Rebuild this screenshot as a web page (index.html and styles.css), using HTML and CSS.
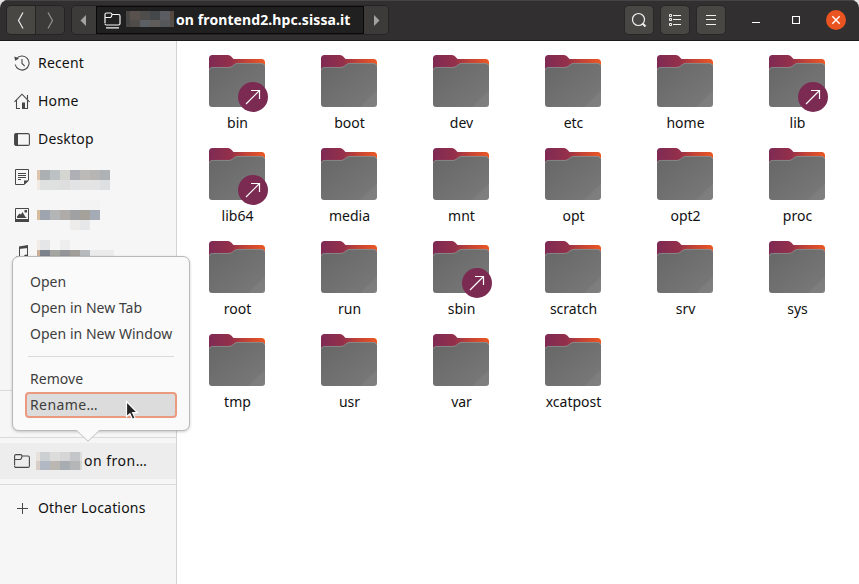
FILE: index.html
```html
<!DOCTYPE html>
<html lang="en">
<head>
<meta charset="utf-8">
<title>Files</title>
<link rel="stylesheet" href="styles.css">
</head>
<body>
<svg class="defs" width="0" height="0" aria-hidden="true">
  <defs>
    <linearGradient id="tab" x1="0" y1="0" x2="1" y2="0">
      <stop offset="0" stop-color="#7e2a54"/><stop offset=".4" stop-color="#94304a"/><stop offset=".62" stop-color="#bd4038"/><stop offset="1" stop-color="#ee5722"/>
    </linearGradient>
    <linearGradient id="front" x1="0" y1="0" x2="1" y2="1">
      <stop offset="0" stop-color="#666"/><stop offset="1" stop-color="#7a7a7a"/>
    </linearGradient>
    <symbol id="folder" viewBox="0 0 60 56">
      <path d="M2 3.500Q2 0 5.500 0H21q2 0 3.200 1.500L26.500 4H54.500Q58 4 58 7.500V20H2z" fill="url(#tab)"/>
      <path d="M2 15.500Q2 12 5.500 12H22q2.200 0 3.700-1.400l1.500-1.300Q28.800 8 31 8H54.500Q58 8 58 11.500V49q0 3-3 3H5q-3 0-3-3z" fill="url(#front)"/>
      <path d="M2.300 15Q2.800 12.400 5.500 12.400H22q2.200 0 3.700-1.400l1.500-1.300Q28.800 8.400 31 8.400H54.500q2.700 0 3.200 2.600" fill="none" stroke="#fff" stroke-opacity=".25" stroke-width=".8"/>
      <path d="M58 35.500V49q0 3-3 3H41z" fill="#fff" fill-opacity=".05"/>
    </symbol>
    <symbol id="link" viewBox="0 0 30 30">
      <circle cx="15" cy="15" r="15" fill="#7b2a52"/>
      <path d="M8 22 21.500 8.500M13 8.500h8.500V17" fill="none" stroke="#fff" stroke-width="1.200"/>
    </symbol>
  </defs>
</svg>
<div class="window">
  <header class="headerbar">
    <div class="nav">
      <button class="btn back" aria-label="Back"><svg width="28" height="28"><path d="M16 6.500 11.500 14.500 16 22.500" fill="none" stroke="#e8e8e7" stroke-width="1.200"/></svg></button>
      <button class="btn forward" aria-label="Forward"><svg width="28" height="28"><path d="M12 6.500 16.500 14.500 12 22.500" fill="none" stroke="#929190" stroke-width="1.200"/></svg></button>
    </div>
    <div class="pathbar">
      <span class="step"><svg width="24" height="28"><path d="M14 9v11L8.500 14.500z" fill="#a3a2a1"/></svg></span>
      <span class="place">
        <svg width="17" height="17" fill="none" stroke="#f5f5f5" stroke-width="1.200"><path d="M1 11V2.500Q1 1 2.500 1h4q1.300 0 1.500 1.500h6.500q1.500 0 1.500 1.500v7.500q0 1.500-1.500 1.500h-12Q1 13 1 11.500M1 5.500h5.500Q7.700 5 8 2.500M2 15.800h13"/></svg>
        <svg class="mask-path" width="48" height="16" shape-rendering="crispEdges"><path fill="#484542" d="M0 0h4v9H0z"/><path fill="#59514d" d="M4 0h10v9H4z"/><path fill="#4e4d4c" d="M14 0h10v9H14z"/><path fill="#45484b" d="M24 0h10v9H24z"/><path fill="#5a5c62" d="M34 0h10v9H34z"/><path fill="#54483f" d="M44 0h4v9h-4z"/><path fill="#444546" d="M0 9h4v7H0z"/><path fill="#504c49" d="M4 9h10v7H4z"/><path fill="#5c6064" d="M14 9h10v7H14z"/><path fill="#605c5a" d="M24 9h10v7H24z"/><path fill="#55575b" d="M34 9h10v7H34z"/><path fill="#564e48" d="M44 9h4v7h-4z"/></svg>
        <span class="place-name">on frontend2.hpc.sissa.it</span>
      </span>
      <span class="step"><svg width="24" height="28"><path d="M10 9v11l5.500-5.500z" fill="#a3a2a1"/></svg></span>
    </div>
    <div class="tools">
      <button class="btn tool" aria-label="Search"><svg width="28" height="28" fill="none" stroke="#f0f0ef"><circle cx="13.500" cy="13.500" r="6" stroke-width="1.200"/><path d="m17.500 17.500 3 3" stroke-width="2"/></svg></button>
      <button class="btn tool" aria-label="List view"><svg width="28" height="28" fill="none" stroke="#f0f0ef"><path d="M12 9.500h8M12 13.500h8M12 18.500h8M8.500 8.500h2v2h-2zM8.500 12.500h2v2h-2zM8.500 17.500h2v2h-2z"/></svg></button>
      <button class="btn tool" aria-label="Menu"><svg width="28" height="28" stroke="#f0f0ef"><path d="M9 9.500h10M9 13.500h10M9 18.500h10"/></svg></button>
    </div>
    <div class="controls">
      <svg width="8" height="20"><path d="M0 12.500h8" stroke="#fff"/></svg>
      <svg width="8" height="20"><path d="M.5 6.500h7v7h-7z" fill="none" stroke="#fff" stroke-width="1.200"/></svg>
      <svg width="20" height="20"><circle cx="10" cy="10" r="10" fill="#e95420"/><path d="m6.300 6.300 7.400 7.400m0-7.400-7.400 7.400" stroke="#fff" stroke-width="1.400"/></svg>
    </div>
  </header>
  <div class="content">
    <nav class="sidebar">
      <div class="row"><svg class="ico" width="16" height="16" fill="none" stroke="#474747" stroke-width="1.100"><path d="M2.200 4.200A7 7 0 1 1 1.200 9.500M8 4v4.500l2.700 2.700"/><path d="M.3 1.500 1.200 5.800 5 3.600z" fill="#474747" stroke="none"/></svg><span>Recent</span></div>
      <div class="row"><svg class="ico" width="16" height="16" fill="none" stroke="#474747" stroke-width="1.100"><path d="M.5 8.800 8 1.200l7.500 7.600M2.500 7v8.500H6M13.500 7v8.500H11M13.500 2v4"/><path d="M8 9.500h3V16H8z" fill="#474747" stroke="none"/></svg><span>Home</span></div>
      <div class="row"><svg class="ico" width="16" height="16"><rect x=".6" y="2.600" width="14.800" height="11.800" rx="1.500" fill="none" stroke="#474747" stroke-width="1.100"/><path d="M1 2.500h3v12H1z" fill="#474747"/></svg><span>Desktop</span></div>
      <div class="row"><svg class="ico" width="16" height="16"><path d="M1.500.5h13V11L10 15.500H1.500zM4 4.500h8M4 6.500h8M4 8.500h8M4 10.500h3" fill="none" stroke="#474747"/><path d="M10 16v-4.500h5z" fill="#474747"/></svg>
        <svg class="mask" width="77" height="38" shape-rendering="crispEdges"><path fill="#dec4ac" d="M0 12h3v10H0z"/><path fill="#adb0b3" d="M3 12h10v10H3z"/><path fill="#bcc1c4" d="M13 12h10v10H13z"/><path fill="#d5d6d1" d="M23 12h10v10H23z"/><path fill="#aeb0b5" d="M33 12h10v10H33z"/><path fill="#bbbab8" d="M43 12h10v10H43z"/><path fill="#b6b5b3" d="M53 12h10v10H53z"/><path fill="#aeb2b5" d="M63 12h10v10H63z"/><path fill="#f0e9e4" d="M0 22h3v10H0z"/><path fill="#dfe1e1" d="M3 22h20v10H3z"/><path fill="#dedede" d="M23 22h10v10H23z"/><path fill="#e2e3e5" d="M33 22h10v10H33z"/><path fill="#e4e4e4" d="M43 22h20v10H43z"/><path fill="#dddfe1" d="M63 22h10v10H63z"/></svg></div>
      <div class="row"><svg class="ico" width="16" height="16"><path d="M1.500 1.500h13v12h-13z" fill="none" stroke="#474747"/><path d="M1 12h14v3H1zM3 11V9.500L5.500 6.500l1.500 1L8.500 5l3 5 1.500 1zM10.500 3h2.500v2.500h-2.500z" fill="#474747"/></svg>
        <svg class="mask" width="77" height="38" shape-rendering="crispEdges"><path fill="#f3f3f3" d="M43 4h20v10H43z"/><path fill="#d8bb9a" d="M0 14h3v10H0z"/><path fill="#9ea5af" d="M3 14h10v10H3z"/><path fill="#b4b5b6" d="M13 14h10v10H13z"/><path fill="#afaba8" d="M23 14h10v10H23z"/><path fill="#a0a1a3" d="M33 14h10v10H33z"/><path fill="#a5a29b" d="M43 14h10v10H43z"/><path fill="#a5abb5" d="M53 14h10v10H53z"/><path fill="#edecea" d="M33 24h10v10H33z"/><path fill="#e5e7e9" d="M43 24h10v10H43z"/></svg></div>
      <div class="row"><svg class="ico" width="16" height="16"><path d="M5.500 12V2.500l8-1V11" fill="none" stroke="#474747"/><path d="M5 1.500 14 0v3L5 4z" fill="#474747"/><circle cx="4" cy="13" r="2" fill="#474747"/><circle cx="12" cy="11.500" r="2" fill="#474747"/></svg>
        <svg class="mask" width="77" height="38" shape-rendering="crispEdges"><path fill="#f1ece7" d="M0 6h3v10H0z"/><path fill="#e4e6e7" d="M3 6h10v10H3z"/><path fill="#eee" d="M23 6h10v10H23z"/><path fill="#cdaf98" d="M0 16h3v10H0z"/><path fill="#7d838c" d="M3 16h10v10H3z"/><path fill="#a5a5a1" d="M13 16h10v10H13z"/><path fill="#949599" d="M23 16h10v10H23z"/><path fill="#a29f9b" d="M33 16h10v10H33z"/><path fill="#b7bbbe" d="M43 16h10v10H43z"/><path fill="#ebebeb" d="M53 16h24v10H53z"/></svg></div>
      <div class="gap-rows"></div>
      <hr>
      <div class="row"></div>
      <hr>
      <div class="row active"><svg class="ico" width="16" height="16" fill="none" stroke="#474747" stroke-width="1.100"><path d="M.6 12.500V3Q.6 1.600 2 1.600h4.500Q8 1.600 8 3h6q1.400 0 1.400 1.400V13q0 1.400-1.400 1.400H2Q.6 14.400.6 13M.6 6.500H6Q7.700 6.300 8 3"/></svg>
        <svg class="mask-mark" width="46" height="18" shape-rendering="crispEdges"><path fill="#e7e0db" d="M0 0h4v9H0z"/><path fill="#cdd0d3" d="M4 0h10v9H4z"/><path fill="#dcdcdb" d="M14 0h10v9H14z"/><path fill="#d6d6d6" d="M24 0h10v9H24z"/><path fill="#c3c5c9" d="M34 0h10v9H34z"/><path fill="#ddd" d="M44 0h2v9h-2z"/><path fill="#d9cec7" d="M0 9h4v9H0z"/><path fill="#b3b9c4" d="M4 9h10v9H4z"/><path fill="#bbb7b3" d="M14 9h10v9H14z"/><path fill="#a8adb1" d="M24 9h10v9H24z"/><path fill="#b5b6b7" d="M34 9h10v9H34z"/><path fill="#d4d4d3" d="M44 9h2v9h-2z"/></svg><span>on fron…</span></div>
      <hr>
      <div class="row"><svg class="ico" width="16" height="16"><path d="M3 8.500h11M8.500 3v11" stroke="#474747"/></svg><span>Other Locations</span></div>
    </nav>
    <main class="files">
      <div class="file"><svg class="folder"><use href="#folder"/></svg><svg class="emblem"><use href="#link"/></svg><span>bin</span></div>
      <div class="file"><svg class="folder"><use href="#folder"/></svg><span>boot</span></div>
      <div class="file"><svg class="folder"><use href="#folder"/></svg><span>dev</span></div>
      <div class="file"><svg class="folder"><use href="#folder"/></svg><span>etc</span></div>
      <div class="file"><svg class="folder"><use href="#folder"/></svg><span>home</span></div>
      <div class="file"><svg class="folder"><use href="#folder"/></svg><svg class="emblem"><use href="#link"/></svg><span>lib</span></div>
      <div class="file"><svg class="folder"><use href="#folder"/></svg><svg class="emblem"><use href="#link"/></svg><span>lib64</span></div>
      <div class="file"><svg class="folder"><use href="#folder"/></svg><span>media</span></div>
      <div class="file"><svg class="folder"><use href="#folder"/></svg><span>mnt</span></div>
      <div class="file"><svg class="folder"><use href="#folder"/></svg><span>opt</span></div>
      <div class="file"><svg class="folder"><use href="#folder"/></svg><span>opt2</span></div>
      <div class="file"><svg class="folder"><use href="#folder"/></svg><span>proc</span></div>
      <div class="file"><svg class="folder"><use href="#folder"/></svg><span>root</span></div>
      <div class="file"><svg class="folder"><use href="#folder"/></svg><span>run</span></div>
      <div class="file"><svg class="folder"><use href="#folder"/></svg><svg class="emblem"><use href="#link"/></svg><span>sbin</span></div>
      <div class="file"><svg class="folder"><use href="#folder"/></svg><span>scratch</span></div>
      <div class="file"><svg class="folder"><use href="#folder"/></svg><span>srv</span></div>
      <div class="file"><svg class="folder"><use href="#folder"/></svg><span>sys</span></div>
      <div class="file"><svg class="folder"><use href="#folder"/></svg><span>tmp</span></div>
      <div class="file"><svg class="folder"><use href="#folder"/></svg><span>usr</span></div>
      <div class="file"><svg class="folder"><use href="#folder"/></svg><span>var</span></div>
      <div class="file"><svg class="folder"><use href="#folder"/></svg><span>xcatpost</span></div>
    </main>
  </div>
  <div class="popover">
    <div class="item">Open</div>
    <div class="item">Open in New Tab</div>
    <div class="item">Open in New Window</div>
    <hr>
    <div class="item">Remove</div>
    <div class="item selected">Rename…</div>
    <svg class="arrow" width="22" height="12"><path d="M0 0v1L11 11.500 22 1V0z" fill="#fafafa"/><path d="M0 .8 11 11.300 22 .8" fill="none" stroke="#bdbdbd"/></svg>
  </div>
  <svg class="cursor" width="14" height="22"><path d="M1.500 1.500v15.200l3.400-3 2.600 5.600 2.600-1.200-2.500-5.400h4.700z" fill="#222" stroke="#fff" stroke-width="1.200"/></svg>
</div>
</body>
</html>
```

FILE: styles.css
```css
* { box-sizing: border-box; }
body {
  margin: 0;
  background: #e4e4e4;
  color: #111;
  font: 14px/20px "Noto Sans", "Open Sans", sans-serif;
}
svg { display: block; flex: none; }
.defs { position: absolute; }
hr { margin: 0; border: 0; }
button { padding: 0; font: inherit; }

.window {
  position: relative;
  width: 859px;
  height: 584px;
  overflow: hidden;
  border-radius: 8px 8px 0 0;
  background: #fff;
}

.headerbar {
  display: flex;
  align-items: flex-start;
  height: 41px;
  padding: 5px 13px 0 6px;
  background: #322f30;
  border-bottom: 1px solid #1c1b1b;
  box-shadow: inset 0 1px #474445;
}
.nav, .pathbar {
  display: flex;
  height: 30px;
  border: 1px solid #252324;
  border-radius: 5px;
  overflow: hidden;
}
.btn { border: 0; background: #484744; }
.nav .btn { width: 28px; }
.nav .forward { width: 29px; background: #3c3b3a; border-left: 1px solid #252324; }
.pathbar { margin-left: 6px; width: 318px; }
.step { width: 24px; background: #3c3b3a; }
.place {
  display: flex;
  align-items: center;
  width: 268px;
  padding-left: 7px;
  background: #202020;
  border: 1px solid #090909;
}
.mask-path { margin: 0 2px 2px 5px; }
.place-name {
  color: #fff;
  font-weight: 700;
  white-space: nowrap;
  letter-spacing: .1px;
}
.tools { display: flex; gap: 6px; margin-left: auto; }
.tool { width: 30px; height: 30px; border: 1px solid #282627; border-radius: 5px; }
.controls { display: flex; align-items: center; height: 30px; margin-left: 26px; }
.controls svg + svg { margin-left: 32px; }
.controls svg:last-child { margin-left: 26px; }

.content { display: flex; height: 543px; }
.sidebar {
  width: 177px;
  padding-top: 3px;
  background: #f6f6f6;
  border-right: 1px solid #d3d3d3;
}
.row {
  display: flex;
  align-items: center;
  height: 38px;
  padding-left: 14px;
  white-space: nowrap;
  letter-spacing: .18px;
}
.row span { margin-left: 8px; }
.mask { margin-left: 7px; }
.mask-mark { margin-left: 6px; }
.row.active { height: 36px; margin: 1px 0; background: #ededed; letter-spacing: .5px; }
.row.active span { margin-left: 2px; }
.gap-rows { height: 114px; }
.sidebar hr { height: 9px; border: solid transparent; border-width: 4px 0; background: #dadada padding-box; }

.files {
  display: grid;
  grid-template-columns: repeat(6, 112px);
  grid-auto-rows: 93px;
  align-content: start;
  padding: 14px 0 0 4px;
}
.file {
  position: relative;
  display: flex;
  flex-direction: column;
  align-items: center;
}
.folder { width: 60px; height: 56px; }
.file span { margin: 2px 0 0 1px; }
.emblem { position: absolute; left: 57px; top: 27px; width: 30px; height: 30px; }

.popover {
  position: absolute;
  left: 12px;
  top: 256px;
  width: 178px;
  height: 175px;
  padding: 12px;
  color: #3d3d3d;
  background: #fafafa;
  border: 1px solid #b9b9b9;
  border-radius: 7px;
  box-shadow: 0 1px 3px rgba(0, 0, 0, .2);
}
.item { height: 26px; padding: 0 5px; line-height: 26px; white-space: nowrap; letter-spacing: .03px; }
.popover hr { height: 1px; margin: 9px 3px; background: #dadada; }
.item.selected {
  padding: 0 3px;
  line-height: 22px;
  letter-spacing: .4px;
  border: 2px solid #eb9a80;
  border-radius: 4px;
  background: #dcdcdc;
}
.arrow { position: absolute; left: 64px; top: 173px; }
.cursor { position: absolute; left: 125px; top: 400px; }
```
